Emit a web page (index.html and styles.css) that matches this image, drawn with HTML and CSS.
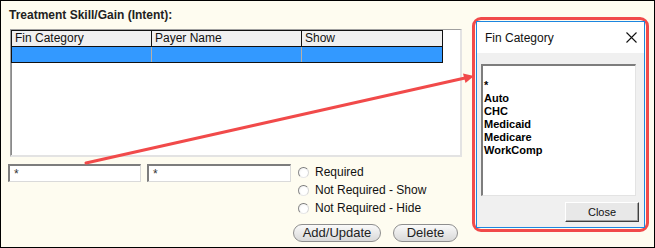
FILE: index.html
```html
<!DOCTYPE html>
<html lang="en">
<head>
    <meta charset="UTF-8">
    <title>Treatment Skill/Gain</title>
    <link rel="stylesheet" href="styles.css">
</head>
<body>
    <div class="frame">
        <h1 class="title">Treatment Skill/Gain (Intent):</h1>
        <div class="grid-box">
            <table class="grid">
                <colgroup>
                    <col class="col-cat">
                    <col class="col-payer">
                    <col class="col-show">
                </colgroup>
                <thead>
                    <tr><th>Fin Category</th><th>Payer Name</th><th>Show</th></tr>
                </thead>
                <tbody>
                    <tr class="selected"><td></td><td></td><td></td></tr>
                </tbody>
            </table>
        </div>
        <div class="edit-row">
            <div class="field field-cat">*</div>
            <div class="field field-payer">*</div>
            <div class="options">
                <label class="option"><span class="radio"></span>Required</label>
                <label class="option"><span class="radio"></span>Not Required - Show</label>
                <label class="option"><span class="radio"></span>Not Required - Hide</label>
                <div class="actions">
                    <button class="pill pill-add">Add/Update</button>
                    <button class="pill pill-delete">Delete</button>
                </div>
            </div>
        </div>

        <!-- popup picker window, highlighted -->
        <div class="callout">
            <div class="window">
                <div class="window-title">
                    <span>Fin Category</span>
                    <svg class="close-x" width="11" height="11" viewBox="0 0 11 11">
                        <path d="M0.5 0.5 L10.5 10.5 M10.5 0.5 L0.5 10.5" stroke="#111" stroke-width="1.1" fill="none"/>
                    </svg>
                </div>
                <div class="window-body">
                    <ul class="picker">
                        <li>*</li>
                        <li>Auto</li>
                        <li>CHC</li>
                        <li>Medicaid</li>
                        <li>Medicare</li>
                        <li>WorkComp</li>
                    </ul>
                    <div class="window-actions">
                        <button class="classic-btn">Close</button>
                    </div>
                </div>
            </div>
        </div>

        <svg class="arrow" width="653" height="246" viewBox="0 0 653 246">
            <line x1="85" y1="162" x2="464" y2="77" stroke="#f14a4a" stroke-width="3" stroke-linecap="round"/>
            <polygon points="473,75 464.5,82 462,72.5" fill="#f14a4a"/>
        </svg>
    </div>
</body>
</html>
```

FILE: styles.css
```css
body {
    margin: 0;
    background: #fff;
}
.frame {
    position: relative;
    width: 655px;
    height: 248px;
    box-sizing: border-box;
    border: 1px solid #000;
    background: #fefcf0;
    padding: 7px 0 0 8px;
    font-family: "Liberation Sans", Arial, sans-serif;
    font-size: 12px;
    color: #111;
}
.title {
    margin: 0;
    font-size: 12px;
    line-height: 15px;
    font-weight: bold;
    color: #222;
}
.grid-box {
    margin: 6px 0 0 1px;
    width: 452px;
    height: 128px;
    box-sizing: border-box;
    background: #fff;
    border-top: 1px solid #a0a0a0;
    border-left: 1px solid #a0a0a0;
    border-right: 2px solid #e3e3e3;
    border-bottom: 2px solid #e3e3e3;
    box-shadow: inset 1px 0 0 #8a8a8a;
}
.grid {
    border-collapse: collapse;
    table-layout: fixed;
    width: 431px;
}
.col-cat { width: 140px; }
.col-payer { width: 150px; }
.col-show { width: 141px; }
.grid th {
    height: 15px;
    padding: 0 0 0 3px;
    text-align: left;
    font-weight: normal;
    font-size: 12px;
    line-height: 15px;
    background: #f0f0f0;
    border: 1px solid #111;
    color: #111;
}
.grid td {
    height: 15px;
    padding: 0;
    background: #3399ff;
    border: 1px solid #111;
}
.grid td:not(:last-child) {
    border-right-color: #b9b0a6;
}
.edit-row {
    display: flex;
    align-items: flex-start;
    margin-top: 7px;
}
.field {
    height: 18px;
    box-sizing: border-box;
    background: #fff;
    border-top: 2px solid #7d7d7d;
    border-left: 2px solid #7d7d7d;
    border-bottom: 1px solid #dadada;
    border-right: 1px solid #dadada;
    padding-left: 4px;
    font-size: 12px;
    line-height: 16px;
    color: #333;
}
.field-cat { width: 133px; margin-left: -1px; }
.field-payer { width: 144px; margin-left: 6px; }
.options {
    margin: -1px 0 0 2px;
}
.option {
    display: flex;
    align-items: center;
    height: 18px;
    padding-left: 5px;
    font-size: 12px;
    color: #111;
}
.radio {
    width: 11px;
    height: 11px;
    box-sizing: border-box;
    border-radius: 50%;
    border: 1px solid;
    border-color: #7a7a7a #d6d6d6 #e8e8e8 #8a8a8a;
    background: radial-gradient(circle at 60% 60%, #fff 40%, #ececec);
    margin-right: 6px;
}
.actions {
    display: flex;
    gap: 12px;
    margin-top: 7px;
}
.pill {
    height: 18px;
    padding: 0;
    border: 1px solid #8e8e8e;
    border-radius: 9px;
    background: linear-gradient(#fafafa, #e9e9e9 50%, #d9d9d9);
    font-family: "Liberation Sans", Arial, sans-serif;
    font-size: 13px;
    line-height: 16px;
    color: #222;
}
.pill-add { width: 88px; }
.pill-delete { width: 65px; }

/* picker popup */
.callout {
    position: absolute;
    left: 471px;
    top: 16px;
    width: 177px;
    height: 215px;
    box-sizing: border-box;
    border: 3px solid #f14a4a;
    border-radius: 9px;
    padding: 1px;
}
.window {
    height: 100%;
    box-sizing: border-box;
    border: 1px solid #1c86e0;
    background: #f0f0f0;
    display: flex;
    flex-direction: column;
}
.window-title {
    height: 31px;
    background: #fff;
    display: flex;
    align-items: center;
    justify-content: space-between;
    padding: 0 7px 0 8px;
    font-family: "Liberation Sans", Arial, sans-serif;
    font-size: 12px;
    color: #111;
}
.close-x {
    display: block;
}
.window-body {
    padding: 11px 5px 0 4px;
}
.picker {
    list-style: none;
    margin: 0;
    width: 155px;
    height: 132px;
    box-sizing: border-box;
    padding: 13px 0 0 1px;
    background: #fff;
    border-top: 2px solid #7d7d7d;
    border-left: 2px solid #7d7d7d;
    border-right: 1px solid #e3e3e3;
    border-bottom: 1px solid #e3e3e3;
    font-size: 11px;
    line-height: 13px;
    font-weight: bold;
    color: #000;
}
.window-actions {
    display: flex;
    justify-content: flex-end;
    margin-top: 6px;
}
.classic-btn {
    width: 74px;
    height: 20px;
    padding: 0;
    background: #e8e8e8;
    border: 1px solid;
    border-color: #fff #404040 #404040 #fff;
    box-shadow: inset -1px -1px 0 #a0a0a0;
    font-family: "Liberation Sans", Arial, sans-serif;
    font-size: 11px;
    color: #111;
}
.arrow {
    position: absolute;
    left: 0;
    top: 0;
    pointer-events: none;
}
```
